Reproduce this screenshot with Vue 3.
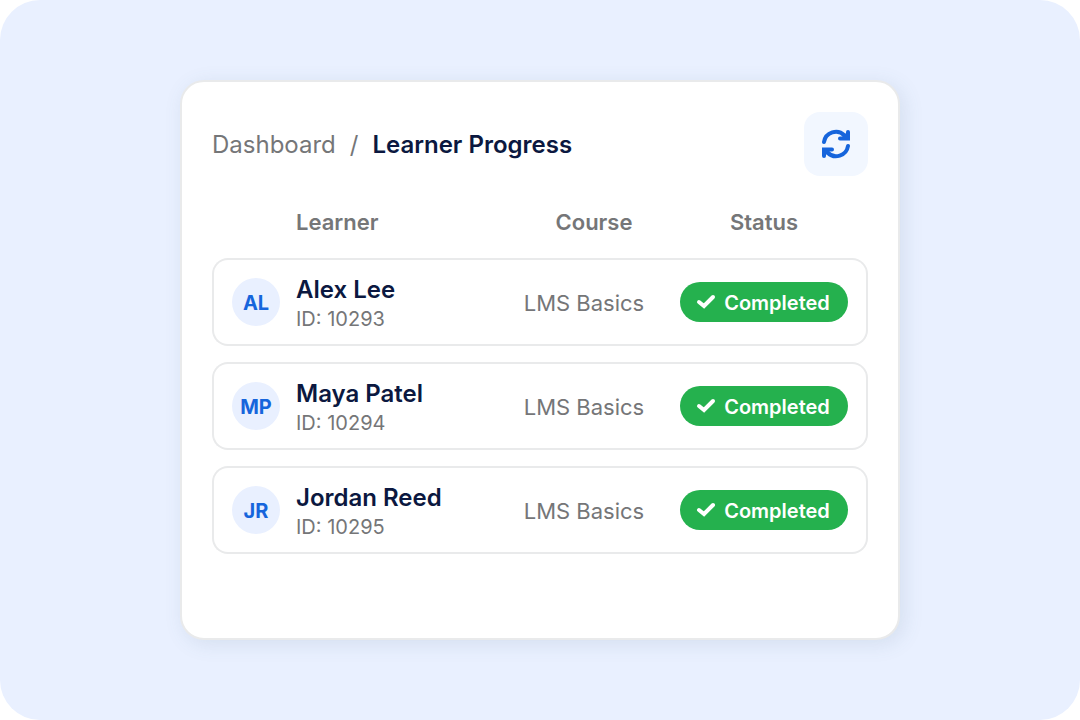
<script setup>
const learners = [
  { initials: 'AL', name: 'Alex Lee', id: '10293', course: 'LMS Basics', status: 'Completed' },
  { initials: 'MP', name: 'Maya Patel', id: '10294', course: 'LMS Basics', status: 'Completed' },
  { initials: 'JR', name: 'Jordan Reed', id: '10295', course: 'LMS Basics', status: 'Completed' },
]
</script>

<template>
  <main class="page">
    <section class="card">
      <header class="top">
        <nav class="crumbs" aria-label="Breadcrumb">
          <a class="crumb" href="#">Dashboard</a>
          <span class="slash">/</span>
          <span class="current" aria-current="page">Learner Progress</span>
        </nav>
        <button class="refresh" type="button" aria-label="Refresh">
          <svg width="32" height="32" viewBox="0 0 32 32" fill="none" stroke="currentColor" stroke-width="4" stroke-linecap="round" stroke-linejoin="round" aria-hidden="true">
            <path d="M4 14A12 12 0 0 1 24.500 7.500" />
            <path d="M28 18A12 12 0 0 1 7.500 24.500" />
            <path d="M28 4v6.500h-8" stroke-linejoin="miter" />
            <path d="M4 28v-6.500h8" stroke-linejoin="miter" />
            <path d="M28 4v7h-7z" fill="currentColor" stroke-width="1" />
            <path d="M4 28v-7h7z" fill="currentColor" stroke-width="1" />
          </svg>
        </button>
      </header>

      <table class="table">
        <thead>
          <tr>
            <th class="learner-col" scope="col">Learner</th>
            <th class="course-col" scope="col">Course</th>
            <th class="status-col" scope="col">Status</th>
          </tr>
        </thead>
        <tbody>
          <tr v-for="learner in learners" :key="learner.id">
            <td>
              <div class="learner">
                <span class="avatar">{{ learner.initials }}</span>
                <div class="person">
                  <div class="name">{{ learner.name }}</div>
                  <div class="id">ID: {{ learner.id }}</div>
                </div>
              </div>
            </td>
            <td class="course">{{ learner.course }}</td>
            <td class="status">
              <span class="badge">
                <svg width="20" height="16" viewBox="0 0 20 16" fill="none" stroke="currentColor" stroke-width="4" stroke-linecap="round" stroke-linejoin="miter" aria-hidden="true">
                  <path d="M3 8L8 12L17 3" />
                </svg>
                {{ learner.status }}
              </span>
            </td>
          </tr>
        </tbody>
      </table>
    </section>
  </main>
</template>

<style>
body {
  margin: 0;
  background: #ffffff;
}
</style>

<style scoped>
.page {
  box-sizing: border-box;
  min-height: 100vh;
  padding: 80px 24px;
  display: flex;
  justify-content: center;
  background: #e9f0ff;
  border-radius: 40px;
  font-family: Inter, "Liberation Sans", sans-serif;
  color: #757678;
}
.card {
  box-sizing: border-box;
  width: 100%;
  max-width: 720px;
  padding: 30px;
  background: #ffffff;
  border: 2px solid #e9eaeb;
  border-radius: 24px;
  box-shadow: 4px 4px 20px rgba(80, 110, 130, 0.13);
}
.top {
  display: flex;
  align-items: center;
  justify-content: space-between;
}
.crumbs {
  display: flex;
  gap: 14px;
  padding-top: 2px;
  font-size: 24px;
  line-height: 32px;
}
.crumb {
  color: inherit;
  text-decoration: none;
}
.current {
  color: #0b1840;
  font-weight: 600;
}
.refresh {
  display: flex;
  align-items: center;
  justify-content: center;
  width: 64px;
  height: 64px;
  padding: 0;
  border: 0;
  border-radius: 16px;
  background: #f2f7ff;
  color: #1665dc;
}
.table {
  width: 100%;
  table-layout: fixed;
  border-collapse: separate;
  border-spacing: 0 16px;
}
th {
  padding: 16px 0 6px;
  font-size: 22px;
  line-height: 28px;
  font-weight: 600;
}
.learner-col {
  padding-left: 84px;
  text-align: left;
}
.course-col {
  width: 172px;
}
.status-col {
  width: 168px;
  padding-right: 20px;
}
td {
  height: 84px;
  padding: 0;
  border: solid #e9eaeb;
  border-width: 2px 0;
}
td:first-child {
  padding-left: 18px;
  border-left-width: 2px;
  border-radius: 16px 0 0 16px;
}
td:last-child {
  padding-right: 18px;
  border-right-width: 2px;
  border-radius: 0 16px 16px 0;
}
.learner {
  display: flex;
  align-items: center;
  gap: 16px;
}
.avatar {
  box-sizing: border-box;
  flex: none;
  width: 48px;
  height: 48px;
  padding-top: 2px;
  border-radius: 50%;
  background: #e9f0ff;
  color: #1665dc;
  font-size: 20px;
  line-height: 46px;
  font-weight: 700;
  text-align: center;
}
.person {
  padding-top: 2px;
}
.name {
  color: #0b1840;
  font-size: 24px;
  line-height: 32px;
  font-weight: 600;
}
.id {
  font-size: 20px;
  line-height: 26px;
}
td.course {
  padding: 2px 20px 0 0;
  height: 82px;
  font-size: 22px;
  line-height: 28px;
  text-align: center;
}
.badge {
  box-sizing: border-box;
  display: flex;
  justify-content: center;
  gap: 8px;
  width: 168px;
  height: 40px;
  padding: 7px 2px 5px 0;
  border-radius: 20px;
  background: #25b14e;
  color: #ffffff;
  font-size: 20px;
  line-height: 28px;
  font-weight: 600;
}
.badge svg {
  margin-top: 5px;
}
</style>
